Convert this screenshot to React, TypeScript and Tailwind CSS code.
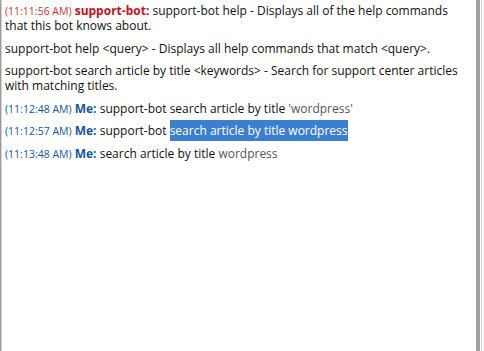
import React from 'react'

type Part = { text: string; kind?: 'quote' | 'sel' | 'plain' }

const BotLine: React.FC<{ children: React.ReactNode }> = ({ children }) => (
  <div className="mb-[7.5px] leading-[15px]">{children}</div>
)

const MeLine: React.FC<{ time: string; parts: Part[] }> = ({ time, parts }) => (
  <div className="mb-[7.5px] leading-[15px]">
    <span className="text-[10.5px] leading-none text-[#16569e]">({time})</span>{' '}
    <span className="font-bold text-[#16569e]">Me:</span>{' '}
    {parts.map((p, i) =>
      p.kind === 'quote' ? (
        <span key={i} className="text-[#555]">{p.text}</span>
      ) : p.kind === 'sel' ? (
        <span key={i} className="bg-[#3c7fd1] text-white py-[2px]">{p.text}</span>
      ) : (
        <span key={i}>{p.text}</span>
      )
    )}
  </div>
)

const App: React.FC = () => {
  return (
    <div
      className="w-[484px] h-[351px] flex bg-white text-[12px] text-[#111]"
      style={{ fontFamily: '"Open Sans", sans-serif' }}
    >
      {/* left frame edge */}
      <div className="w-[1px] bg-[#9a9a9a]" />
      <div className="w-[1px] bg-[#d4d4d4]" />

      {/* conversation */}
      <div className="flex-1 pl-[3px] pr-[6px] pt-[3px]">
        <BotLine>
          <span className="text-[10.5px] leading-none text-[#d0303c]">(11:11:56 AM)</span>{' '}
          <span className="font-bold text-[#c4101c]">support-bot:</span> support-bot help - Displays all of the help
          commands that this bot knows about.
        </BotLine>
        <BotLine>support-bot help &lt;query&gt; - Displays all help commands that match &lt;query&gt;.</BotLine>
        <BotLine>
          support-bot search article by title &lt;keywords&gt; - Search for support center articles with matching
          titles.
        </BotLine>
        <MeLine
          time="11:12:48 AM"
          parts={[{ text: 'support-bot search article by title ' }, { text: "'wordpress'", kind: 'quote' }]}
        />
        <MeLine
          time="11:12:57 AM"
          parts={[{ text: 'support-bot ' }, { text: 'search article by title wordpress', kind: 'sel' }]}
        />
        <MeLine
          time="11:13:48 AM"
          parts={[{ text: 'search article by title ' }, { text: 'wordpress', kind: 'quote' }]}
        />
      </div>

      {/* right frame edge */}
      <div className="w-[4px] bg-[#a0a0a0]" />
      <div className="w-[1px]" />
      <div className="w-[1px] bg-[#d0d0d0]" />
      <div className="w-[2px]" />
    </div>
  )
}

export default App
